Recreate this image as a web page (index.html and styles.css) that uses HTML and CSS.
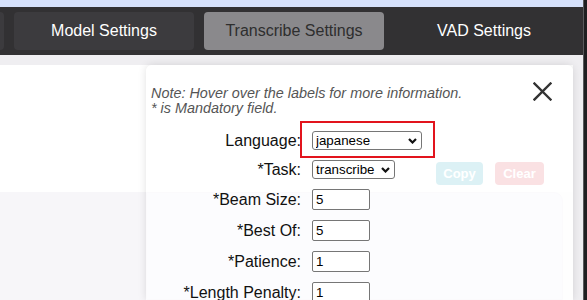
FILE: index.html
```html
<!DOCTYPE html>
<html lang="en">
<head>
  <meta charset="UTF-8" />
  <meta name="viewport" content="width=device-width, initial-scale=1.0"/>
  <title>Transcribe Settings</title>
  <link rel="stylesheet" href="styles.css">
</head>
<body>
  <div class="window">
    <div class="app">
      <div class="top-strip"></div>

      <nav class="tabs">
        <button class="tab tab-cut"></button>
        <button class="tab">Model Settings</button>
        <button class="tab active">Transcribe Settings</button>
        <button class="tab tab-plain">VAD Settings</button>
      </nav>

      <main class="page">
        <div class="sheet">
          <section class="panel-top">
            <div class="actions">
              <button class="btn btn-copy">Copy</button>
              <button class="btn btn-clear">Clear</button>
            </div>
          </section>
          <section class="panel-bottom">
            <div class="card"></div>
          </section>

          <div class="modal">
            <div class="modal-head">
              <p class="note">Note: Hover over the labels for more information.<br>* is Mandatory field.</p>
              <button class="close" title="Close">
                <svg width="19" height="19" viewBox="0 0 19 19">
                  <path d="M1.5 1.5 L17.5 17.5 M17.5 1.5 L1.5 17.5" stroke="#333" stroke-width="2.4" stroke-linecap="square" fill="none"/>
                </svg>
              </button>
            </div>

            <div class="form">
              <label title="Language spoken in the audio">Language:</label>
              <span class="select-wrap highlight">
                <select class="sel sel-lang">
                  <option>japanese</option>
                </select>
                <svg class="chev" width="9" height="6" viewBox="0 0 9 6"><path d="M1 1 L4.5 4.5 L8 1" stroke="#111" stroke-width="2.2" fill="none"/></svg>
              </span>

              <label title="Transcribe or translate">*Task:</label>
              <span class="select-wrap">
                <select class="sel sel-task">
                  <option>transcribe</option>
                </select>
                <svg class="chev" width="9" height="6" viewBox="0 0 9 6"><path d="M1 1 L4.5 4.5 L8 1" stroke="#111" stroke-width="2.2" fill="none"/></svg>
              </span>

              <label>*Beam Size:</label>
              <input class="num" type="text" value="5">

              <label>*Best Of:</label>
              <input class="num" type="text" value="5">

              <label>*Patience:</label>
              <input class="num" type="text" value="1">

              <label>*Length Penalty:</label>
              <input class="num" type="text" value="1">
            </div>
          </div>
        </div>
      </main>
    </div>
    <div class="edge"></div>
  </div>
</body>
</html>
```

FILE: styles.css
```css
* {
  box-sizing: border-box;
  font-family: 'Liberation Sans', Arial, sans-serif;
}

body {
  margin: 0;
  height: 300px;
  overflow: hidden;
  background: #efeef1;
}

.window {
  display: flex;
  height: 300px;
}

.app {
  flex: 1;
  display: flex;
  flex-direction: column;
  min-width: 0;
}

.edge {
  width: 4px;
  background: #1f1f21;
  border-left: 1px solid #5a5a5c;
}

.top-strip {
  height: 7px;
  background: #d6e1fb;
}

.tabs {
  height: 48px;
  background: #323133;
  display: flex;
  gap: 10px;
  padding: 5px 0;
  overflow: hidden;
}

.tab {
  flex: 0 0 180px;
  border: none;
  border-radius: 4px;
  background: #3c3b3e;
  color: #fff;
  font-size: 16px;
  cursor: pointer;
}

.tab-cut {
  margin-left: -176px;
}

.tab.active {
  background: #8a898c;
  color: #2e2e2e;
}

.tab.tab-plain {
  background: transparent;
}

.page {
  flex: 1;
  padding: 10px 10px 0 0;
  background: #efeef1;
}

.sheet {
  position: relative;
  height: 100%;
  display: flex;
  flex-direction: column;
}

.panel-top {
  height: 128px;
  background: #fff;
  border-bottom: 1px solid #dcdcdc;
  display: flex;
  justify-content: flex-end;
  align-items: flex-end;
  padding: 0 29px 7px 0;
}

.actions {
  display: flex;
  gap: 12px;
}

.btn {
  height: 23px;
  border: none;
  border-radius: 4px;
  color: #fff;
  font-size: 13px;
  font-weight: bold;
  padding: 0;
}

.btn-copy {
  width: 47px;
  background: #17a2b8;
}

.btn-clear {
  width: 49px;
  background: #dc3545;
}

.panel-bottom {
  flex: 1;
  background: #f7f6f9;
  padding: 0 10px 0 146px;
  margin-top: -1px;
}

.card {
  height: 100%;
  background: #ebe7f7;
  border: 1px solid #e0dbea;
  border-radius: 0 9px 0 0;
}

/* modal over the page */
.modal {
  position: absolute;
  left: 146px;
  top: 0;
  right: 0;
  bottom: 0;
  background: rgba(255, 255, 255, 0.85);
  border-radius: 6px 6px 0 0;
  box-shadow: 0 0 8px rgba(0, 0, 0, 0.12);
  padding: 17px 21px 0 5px;
  overflow: hidden;
}

.modal-head {
  display: flex;
  justify-content: space-between;
  align-items: flex-start;
}

.note {
  margin: 4px 0 0;
  font-size: 14.4px;
  line-height: 15px;
  font-style: italic;
  color: #555;
}

.close {
  border: none;
  background: none;
  padding: 0;
  width: 19px;
  height: 19px;
  cursor: pointer;
}

.close svg {
  display: block;
}

.form {
  margin-top: 15px;
  display: grid;
  grid-template-columns: 150px auto;
  column-gap: 11px;
  row-gap: 10px;
  align-items: center;
  justify-items: start;
}

.form label {
  justify-self: end;
  font-size: 16px;
  color: #111;
  line-height: 18px;
}

.select-wrap {
  position: relative;
  display: inline-block;
  height: 19px;
}

.highlight::after {
  content: '';
  position: absolute;
  left: -12px;
  right: -13px;
  top: -10px;
  bottom: -8px;
  border: 2px solid #e2141d;
}

.sel {
  appearance: none;
  -webkit-appearance: none;
  display: block;
  height: 19px;
  border: 1px solid #767676;
  border-radius: 3px;
  background: #fff;
  color: #000;
  font-size: 13.33px;
  padding: 0 0 0 3px;
  margin: 0;
}

.sel-lang {
  width: 110px;
}

.sel-task {
  width: 83px;
}

.chev {
  position: absolute;
  right: 5px;
  top: 7px;
  pointer-events: none;
}

.num {
  width: 58px;
  height: 21px;
  border: 1px solid #767676;
  border-radius: 2px;
  padding: 1px 3px;
  font-size: 13.33px;
  color: #000;
  margin: 0;
}
```
